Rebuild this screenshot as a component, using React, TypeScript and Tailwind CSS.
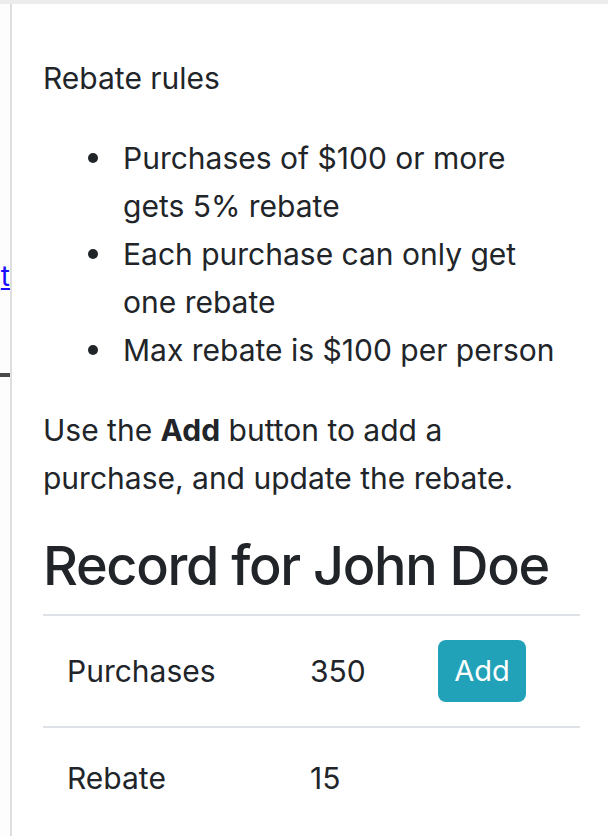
export default function App() {
  const rules = [
    "Purchases of $100 or more gets 5% rebate",
    "Each purchase can only get one rebate",
    "Max rebate is $100 per person",
  ];

  return (
    <div className="flex min-h-screen flex-col bg-white text-[#212529] font-['Inter','Liberation_Sans',sans-serif]">
      <div className="h-[4px] bg-[#ececec]" />
      <div className="flex flex-1">
        {/* left column, cut off */}
        <aside className="w-[12px] shrink-0 overflow-hidden border-r-2 border-[#dedede] bg-[#fdfdfd]">
          <div className="h-[258px]" />
          <a href="#" className="block w-[10px] overflow-hidden text-right text-[28px] leading-[28px] text-[#1a0dff] underline">
            t
          </a>
          <div className="h-[83px]" />
          <div className="h-[4px] w-[10px] bg-[#4a4a4a]" />
        </aside>

        <main className="flex-1 pl-[31px] pr-[28px] pt-[50px] pb-[20px] text-[30px] leading-[48px]">
          <p className="mb-[32px]">Rebate rules</p>
          <ul className="mb-[32px] pl-[45px] pr-[10px]">
            {rules.map((r, i) => (
              <li key={i} className="flex">
                <span className="flex h-[48px] w-[35px] shrink-0 items-center">
                  <span className="h-[10px] w-[10px] rounded-full bg-[#212529]" />
                </span>
                <span>{r}</span>
              </li>
            ))}
          </ul>
          <p className="mb-[30px]">
            Use the <b className="font-bold">Add</b> button to add a purchase, and update the rebate.
          </p>
          <h2 className="mb-[14px] whitespace-nowrap text-[54px] leading-[68px] font-medium tracking-[-1.3px]">
            Record for John Doe
          </h2>
          <table className="w-full border-collapse">
            <tbody>
              <tr className="border-t-2 border-[#dee2e6]">
                <td className="w-[243px] px-[24px] py-[24px] align-middle">Purchases</td>
                <td className="w-[128px] px-[24px] py-[24px] align-middle">350</td>
                <td className="px-[24px] py-[24px] align-middle">
                  <button className="h-[62px] w-[88px] rounded-[8px] bg-[#22a2b8] text-[29px] text-white">Add</button>
                </td>
              </tr>
              <tr className="border-t-2 border-[#dee2e6]">
                <td className="px-[24px] py-[26px]">Rebate</td>
                <td className="px-[24px] py-[26px]">15</td>
                <td className="px-[24px] py-[26px]" />
              </tr>
            </tbody>
          </table>
        </main>
      </div>
    </div>
  );
}
